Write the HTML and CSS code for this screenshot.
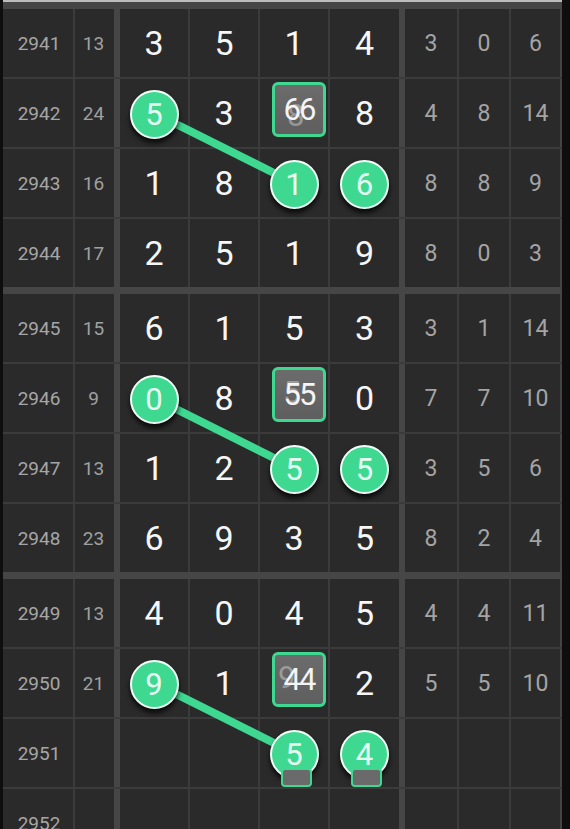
FILE: index.html
```html
<!DOCTYPE html>
<html>
<head>
<meta charset="utf-8">
<link rel="stylesheet" href="styles.css">
</head>
<body>
<div class="screen">
  <div class="board">
    <div class="topbar"></div>
    <div class="group">
      <div class="row"><div class="c iss">2941</div><div class="c sum">13</div><div class="c d">3</div><div class="c d">5</div><div class="c d">1</div><div class="c d d4">4</div><div class="c r r1">3</div><div class="c r r2">0</div><div class="c r r3">6</div></div>
      <div class="row"><div class="c iss">2942</div><div class="c sum">24</div><div class="c d"><span class="ball">5</span></div><div class="c d">3</div><div class="c d"><span class="tile"><span class="ghost g8">8</span>66</span></div><div class="c d d4">8</div><div class="c r r1">4</div><div class="c r r2">8</div><div class="c r r3">14</div></div>
      <div class="row"><div class="c iss">2943</div><div class="c sum">16</div><div class="c d">1</div><div class="c d">8</div><div class="c d"><span class="ball">1</span></div><div class="c d d4"><span class="ball">6</span></div><div class="c r r1">8</div><div class="c r r2">8</div><div class="c r r3">9</div></div>
      <div class="row last"><div class="c iss">2944</div><div class="c sum">17</div><div class="c d">2</div><div class="c d">5</div><div class="c d">1</div><div class="c d d4">9</div><div class="c r r1">8</div><div class="c r r2">0</div><div class="c r r3">3</div></div>
    </div>
    <div class="group">
      <div class="row"><div class="c iss">2945</div><div class="c sum">15</div><div class="c d">6</div><div class="c d">1</div><div class="c d">5</div><div class="c d d4">3</div><div class="c r r1">3</div><div class="c r r2">1</div><div class="c r r3">14</div></div>
      <div class="row"><div class="c iss">2946</div><div class="c sum">9</div><div class="c d"><span class="ball">0</span></div><div class="c d">8</div><div class="c d"><span class="tile"><span class="ghost g5">5</span>55</span></div><div class="c d d4">0</div><div class="c r r1">7</div><div class="c r r2">7</div><div class="c r r3">10</div></div>
      <div class="row"><div class="c iss">2947</div><div class="c sum">13</div><div class="c d">1</div><div class="c d">2</div><div class="c d"><span class="ball">5</span></div><div class="c d d4"><span class="ball">5</span></div><div class="c r r1">3</div><div class="c r r2">5</div><div class="c r r3">6</div></div>
      <div class="row last"><div class="c iss">2948</div><div class="c sum">23</div><div class="c d">6</div><div class="c d">9</div><div class="c d">3</div><div class="c d d4">5</div><div class="c r r1">8</div><div class="c r r2">2</div><div class="c r r3">4</div></div>
    </div>
    <div class="group">
      <div class="row"><div class="c iss">2949</div><div class="c sum">13</div><div class="c d">4</div><div class="c d">0</div><div class="c d">4</div><div class="c d d4">5</div><div class="c r r1">4</div><div class="c r r2">4</div><div class="c r r3">11</div></div>
      <div class="row"><div class="c iss">2950</div><div class="c sum">21</div><div class="c d"><span class="ball">9</span></div><div class="c d">1</div><div class="c d"><span class="tile"><span class="ghost g9">9</span>44</span></div><div class="c d d4">2</div><div class="c r r1">5</div><div class="c r r2">5</div><div class="c r r3">10</div></div>
      <div class="row"><div class="c iss">2951</div><div class="c sum"></div><div class="c d"></div><div class="c d"></div><div class="c d"><span class="ball trail">5<span class="stub"></span></span></div><div class="c d d4"><span class="ball trail">4<span class="stub"></span></span></div><div class="c r r1"></div><div class="c r r2"></div><div class="c r r3"></div></div>
      <div class="row"><div class="c iss">2952</div><div class="c sum"></div><div class="c d"></div><div class="c d"></div><div class="c d"></div><div class="c d d4"></div><div class="c r r1"></div><div class="c r r2"></div><div class="c r r3"></div></div>
    </div>
  </div>
  <svg class="links" width="570" height="829" viewBox="0 0 570 829">
    <line x1="154" y1="113" x2="294" y2="183"/>
    <line x1="154" y1="398" x2="294" y2="468"/>
    <line x1="154" y1="683" x2="294" y2="753"/>
  </svg>
</div>
</body>
</html>
```
FILE: styles.css
```css
html, body {
  margin: 0;
  padding: 0;
  background: #0e0e0e;
}
.screen {
  position: relative;
  width: 570px;
  height: 829px;
  overflow: hidden;
  background: #0e0e0e;
}
.board {
  margin-left: 3px;
  width: 559px;
  background: #2a2a2a;
  font-family: Roboto, "Noto Sans", sans-serif;
}
.topbar {
  height: 2px;
  background: #bcbcbc;
}
.group {
  border-top: 7px solid #464646;
}
.row {
  display: grid;
  grid-template-columns: 72px 45px 70px 70px 70px 75px 54px 52px 51px;
  height: 70px;
  box-sizing: border-box;
  border-bottom: 2px solid #3b3b3b;
}
.row.last {
  border-bottom: none;
  height: 68px;
}
.c {
  display: flex;
  align-items: center;
  justify-content: center;
  box-sizing: border-box;
  border-right: 2px solid #3b3b3b;
  background: #2a2a2a;
}
.iss {
  font-size: 19px;
  color: #a6a6a6;
  padding-left: 2px;
}
.sum {
  font-size: 19px;
  color: #a0a0a0;
  border-right: 6px solid #464646;
  padding-right: 2px;
}
.d {
  font-size: 34px;
  color: #f6f6f6;
}
.d4 {
  border-right: 6px solid #464646;
}
.r {
  font-size: 23px;
  color: #a4a4a4;
}
.r3 {
  border-right: 2px solid #444;
}
.ball {
  position: relative;
  z-index: 2;
  width: 45px;
  height: 45px;
  border-radius: 50%;
  border: 2px solid #f2fff8;
  background: #3ed891;
  color: #e6fff1;
  font-size: 31px;
  display: flex;
  align-items: center;
  justify-content: center;
  box-shadow: 0 4px 5px rgba(0, 0, 0, 0.75);
  margin-top: 2px;
}
.trail .stub {
  position: absolute;
  z-index: -1;
  left: 9px;
  top: 36px;
  width: 27px;
  height: 15px;
  border: 2px solid #3ed891;
  border-radius: 4px;
  background: #6a6a6a;
}
.tile {
  position: relative;
  z-index: 2;
  width: 48px;
  height: 49px;
  border: 3px solid #3ed891;
  border-radius: 6px;
  background: linear-gradient(#6c6c6c, #5e5e5e);
  color: #f4f4f4;
  font-size: 31px;
  letter-spacing: -2px;
  display: flex;
  align-items: center;
  justify-content: center;
  margin-left: 10px;
  margin-top: -8px;
}
.ghost {
  position: absolute;
  color: rgba(255, 255, 255, 0.35);
  font-size: 31px;
}
.g8 { left: 12px; top: 12px; }
.g5 { left: 8px; top: 4px; }
.g9 { left: 3px; top: 4px; }
.links {
  position: absolute;
  left: 0;
  top: 0;
  z-index: 1;
  pointer-events: none;
}
.links line {
  stroke: #3ed891;
  stroke-width: 8;
}
```
